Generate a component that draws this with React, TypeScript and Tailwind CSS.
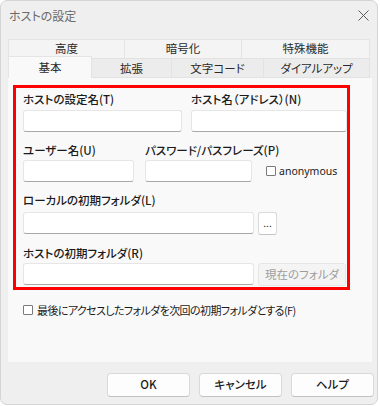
import React from "react";

const font = {
  fontFamily: '"Noto Sans CJK JP", "Noto Sans", sans-serif',
  fontFeatureSettings: '"palt"',
};

function Input({ w }: { w: string }) {
  return (
    <div
      className={`${w} h-[22px] bg-white border border-[#e6e6e6] border-b-[#a8a8a8] rounded-[3px]`}
    />
  );
}

function Label({ children }: { children: React.ReactNode }) {
  return (
    <div className="h-[16px] leading-[16px] text-[11.5px] font-medium text-[#1b1b1b] whitespace-nowrap">
      {children}
    </div>
  );
}

function Checkbox() {
  return (
    <div className="w-[10px] h-[10px] border border-[#7a7a7a] rounded-[1px] bg-white shrink-0" />
  );
}

export default function App() {
  return (
    <div className="w-[380px] h-[406px] bg-white" style={font}>
      <div className="w-[378px] h-[405px] rounded-[7px] border border-[#d4d4d4] bg-[#efefef] flex flex-col overflow-hidden">
        {/* Title bar */}
        <div className="h-[29px] flex items-center justify-between pl-[8px] pr-[8px] shrink-0">
          <span className="text-[12px] text-[#6a6a6a] leading-none">ホストの設定</span>
          <svg width="11" height="11" viewBox="0 0 11 11">
            <path d="M0.5 0.5 L10.5 10.5 M10.5 0.5 L0.5 10.5" stroke="#5a5a5a" strokeWidth="1" />
          </svg>
        </div>

        {/* Tabs */}
        <div className="ml-[7px] mt-[9px] flex flex-col">
          <div className="flex h-[19px] text-[11.5px] text-[#2a2a2a]">
            <div className="w-[117px] bg-[#f4f4f4] border border-b-0 border-[#e4e4e4] flex items-center justify-center">高度</div>
            <div className="w-[117px] bg-[#f4f4f4] border border-b-0 border-l-0 border-[#e4e4e4] flex items-center justify-center">暗号化</div>
            <div className="w-[128px] bg-[#f4f4f4] border border-b-0 border-l-0 border-[#e4e4e4] flex items-center justify-center">特殊機能</div>
          </div>
          <div className="flex h-[20px] text-[11.5px] text-[#2a2a2a] items-end">
            <div className="w-[84px] h-[22px] -mt-[2px] bg-[#f9f9f9] border border-b-0 border-[#e4e4e4] flex items-start pt-[2px] justify-center relative z-10">基本</div>
            <div className="w-[80px] h-[20px] bg-[#ececec] border border-l-0 border-[#e2e2e2] flex items-center justify-center pt-[2px]">拡張</div>
            <div className="w-[92px] h-[20px] bg-[#ececec] border border-l-0 border-[#e2e2e2] flex items-center justify-center pt-[2px]">文字コード</div>
            <div className="w-[106px] h-[20px] bg-[#ececec] border border-l-0 border-[#e2e2e2] flex items-center justify-center pt-[2px]">ダイアルアップ</div>
          </div>
        </div>

        {/* Panel */}
        <div className="ml-[7px] w-[364px] h-[284px] bg-[#f9f9f9] shrink-0 flex flex-col pl-[5px] pt-[7px]">
          <div className="w-[337px] h-[205px] border-[3px] border-[#ff0000] pl-[7px] pt-[3px] flex flex-col">
            {/* Row 1 */}
            <div className="flex gap-[9px]">
              <div className="flex flex-col w-[159px]">
                <Label>ホストの設定名(T)</Label>
                <div className="mt-[3px]"><Input w="w-[159px]" /></div>
              </div>
              <div className="flex flex-col w-[156px]">
                <Label>ホスト名（アドレス）(N)</Label>
                <div className="mt-[3px]"><Input w="w-[156px]" /></div>
              </div>
            </div>
            {/* Row 2 */}
            <div className="flex gap-[11px] mt-[10px] items-start">
              <div className="flex flex-col w-[111px]">
                <Label>ユーザー名(U)</Label>
                <div className="mt-[2px]"><Input w="w-[111px]" /></div>
              </div>
              <div className="flex flex-col w-[107px]">
                <Label>パスワード/パスフレーズ(P)</Label>
                <div className="mt-[2px]"><Input w="w-[107px]" /></div>
              </div>
              <div className="flex items-center gap-[3px] ml-[3px] mt-[18px] h-[22px]">
                <Checkbox />
                <span className="text-[10.5px] text-[#1b1b1b] leading-none" style={{ fontFamily: '"Noto Sans", sans-serif' }}>anonymous</span>
              </div>
            </div>
            {/* Row 3 */}
            <div className="flex flex-col mt-[10px]">
              <Label>ローカルの初期フォルダ(L)</Label>
              <div className="flex gap-[4px] mt-[4px]">
                <Input w="w-[231px]" />
                <div className="w-[19px] h-[23px] bg-white border border-[#dadada] border-b-[#c4c4c4] rounded-[3px] flex items-center justify-center text-[10px] text-[#222] leading-none pb-[2px]">...</div>
              </div>
            </div>
            {/* Row 4 */}
            <div className="flex flex-col mt-[10px]">
              <Label>ホストの初期フォルダ(R)</Label>
              <div className="flex gap-[4px] mt-[2px]">
                <Input w="w-[231px]" />
                <div className="w-[88px] h-[23px] bg-[#f4f4f4] border border-[#e6e6e6] rounded-[3px] flex items-center justify-center text-[11.5px] text-[#9d9d9d]">現在のフォルダ</div>
              </div>
            </div>
          </div>
          {/* Checkbox row */}
          <div className="flex items-center gap-[4px] mt-[12px] ml-[10px] h-[16px]">
            <Checkbox />
            <span className="text-[11px] text-[#1b1b1b] leading-none tracking-[-0.6px]">最後にアクセスしたフォルダを次回の初期フォルダとする(F)</span>
          </div>
        </div>

        {/* Buttons */}
        <div className="flex gap-[9px] mt-[11px] ml-[106px]">
          {["OK", "キャンセル", "ヘルプ"].map((t) => (
            <div
              key={t}
              className="w-[83px] h-[24px] bg-[#fdfdfd] border border-[#d9d9d9] border-b-[#c2c2c2] rounded-[4px] flex items-center justify-center text-[11.5px] font-medium text-[#1b1b1b]"
            >
              {t}
            </div>
          ))}
        </div>
      </div>
    </div>
  );
}
